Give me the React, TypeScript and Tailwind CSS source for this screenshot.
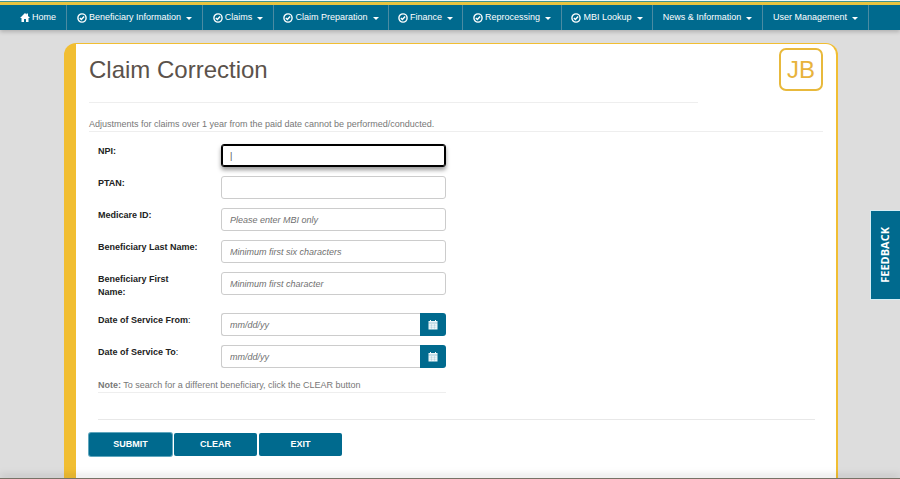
import React from "react";

type NavItem = { label: string; width: string; check?: boolean };

const navItems: NavItem[] = [
  { label: "Beneficiary Information", width: "w-[136px]", check: true },
  { label: "Claims", width: "w-[71px]", check: true },
  { label: "Claim Preparation", width: "w-[115px]", check: true },
  { label: "Finance", width: "w-[74px]", check: true },
  { label: "Reprocessing", width: "w-[99px]", check: true },
  { label: "MBI Lookup", width: "w-[91px]", check: true },
  { label: "News & Information", width: "w-[110px]" },
  { label: "User Management", width: "w-[106px]" },
];

function HomeIcon() {
  return (
    <svg viewBox="0 0 20 18" className="h-[9px] w-[10px] shrink-0 fill-white" aria-hidden="true">
      <path d="M10 0 0 10h3v8h5v-6h4v6h5v-8h3l-4-4V1h-3v2z" />
    </svg>
  );
}

function CheckIcon() {
  return (
    <svg viewBox="0 0 20 20" className="h-[10px] w-[10px] shrink-0" fill="none" stroke="white" aria-hidden="true">
      <circle cx="10" cy="10" r="8.2" strokeWidth="2.8" />
      <path d="m5.8 9.8 3 3.2 5.4-5.8" strokeWidth="3" />
    </svg>
  );
}

function CalendarIcon() {
  return (
    <svg viewBox="0 0 20 20" className="h-[10px] w-[10px]" aria-hidden="true">
      <path d="M1 2h3V0h2v2h8V0h2v2h3v17H1z" fill="#eef7fa" />
      <path d="M1 6h18" stroke="#006a8e" strokeOpacity=".5" strokeWidth="1.4" />
      <path d="M3 10.5h14M3 14.5h14M7 8v10M13 8v10" stroke="#006a8e" strokeOpacity=".25" strokeWidth="1" />
    </svg>
  );
}

const fieldBase =
  "h-[23px] min-w-0 flex-1 border bg-white px-2 text-[9px] text-[#555] placeholder:italic placeholder:text-[#707070] outline-none";

type FieldProps = {
  id: string;
  label: string;
  placeholder?: string;
  date?: boolean;
  active?: boolean;
  narrowLabel?: boolean;
};

function Field({ id, label, placeholder, date, active, narrowLabel }: FieldProps) {
  return (
    <div className="flex items-start pb-[9px]">
      <label
        htmlFor={id}
        className={`w-[123px] shrink-0 pt-px font-bold leading-[13px] text-[#222] ${narrowLabel ? "pr-8" : "pr-4"}`}
      >
        {date ? label : `${label}:`}
        {date && <span className="font-normal">:</span>}
      </label>
      <div className="flex min-w-0 flex-1">
        <input
          id={id}
          type="text"
          placeholder={placeholder}
          defaultValue={active ? "|" : undefined}
          className={`${fieldBase} ${date ? "rounded-l-[3px] border-r-0" : "rounded-[3px]"} ${
            active
              ? "border-black shadow-[0_3px_4px_rgba(0,0,0,0.4)] ring-1 ring-inset ring-black"
              : "border-[#ccc]"
          }`}
        />
        {date && (
          <button
            type="button"
            aria-label={`Choose ${label}`}
            className="flex h-[23px] w-[26px] items-center justify-center rounded-r-[3px] bg-[#006a8e]"
          >
            <CalendarIcon />
          </button>
        )}
      </div>
    </div>
  );
}

const actionClass = "h-[23px] w-[83px] rounded-[2px] bg-[#006a8e] text-[9px] font-bold text-white";

export default function App() {
  return (
    <div className="flex min-h-screen flex-col bg-[#ddd] font-['Liberation_Sans',Arial,sans-serif] text-[9px] text-[#666]">
      <header className="relative z-10 border-t border-[#f4f8f6] bg-[#006a8e] shadow-[0_2px_4px_rgba(0,0,0,0.2)]">
        <div className="h-[4px] border-t border-[#3f9490] bg-[#e9c440]" />
        <nav className="flex h-[25px] pl-[10px] text-[9px] text-white">
          <a href="#home" className="flex w-[57px] items-center justify-center gap-[2px] border-r border-[#4b8ba2]">
            <HomeIcon />
            Home
          </a>
          {navItems.map((item) => (
            <button
              key={item.label}
              type="button"
              className={`flex shrink-0 items-center justify-center whitespace-nowrap border-r border-[#4b8ba2] ${item.width}`}
            >
              {item.check && <CheckIcon />}
              <span className={item.check ? "ml-[2px]" : ""}>{item.label}</span>
              <span className="ml-[5px] mt-px border-x-[3px] border-t-[3px] border-x-transparent border-t-white" />
            </button>
          ))}
        </nav>
      </header>

      <main className="ml-[64px] mr-[62px] mt-[13px] flex-1 rounded-t-[12px] border-l-[12px] border-r-2 border-t border-[#f1be32] bg-white pl-[13px] pr-[13px]">
        <div className="flex items-start justify-between">
          <h1 className="h-[59px] flex-1 border-b border-[#eee] pt-[10px] text-[24px] leading-[32px] text-[#5b524b]">
            Claim Correction
          </h1>
          <div className="w-[125px] pt-[4px]">
            <div className="ml-auto flex h-[43px] w-[44px] items-center justify-center rounded-[7px] border-2 border-[#e8b93c] text-[24px] text-[#e8b33c]">
              JB
            </div>
          </div>
        </div>

        <p className="mt-[15px] border-b border-[#eee] leading-[13px] text-[#777]">
          Adjustments for claims over 1 year from the paid date cannot be performed/conducted.
        </p>

        <form onSubmit={(event) => event.preventDefault()}>
          <div className="ml-[9px] mt-[12px] w-[348px] max-w-full">
            <Field id="npi" label="NPI" active />
            <Field id="ptan" label="PTAN" />
            <Field id="medicare-id" label="Medicare ID" placeholder="Please enter MBI only" />
            <Field id="last-name" label="Beneficiary Last Name" placeholder="Minimum first six characters" />
            <div className="pb-[5px]">
              <Field id="first-name" label="Beneficiary First Name" placeholder="Minimum first character" narrowLabel />
            </div>
            <Field id="date-from" label="Date of Service From" placeholder="mm/dd/yy" date />
            <Field id="date-to" label="Date of Service To" placeholder="mm/dd/yy" date />
            <p className="mt-[2px] border-b border-[#eee] leading-[13px] text-[#777]">
              <strong>Note:</strong> To search for a different beneficiary, click the CLEAR button
            </p>
          </div>
          <hr className="ml-[9px] mr-2 mt-[26px] border-[#e8e8e8]" />
          <div className="mt-[13px] flex gap-[2px] pb-[21px]">
            <button type="submit" className={`${actionClass} ring-1 ring-[#5fa6bd]`}>SUBMIT</button>
            <button type="reset" className={actionClass}>CLEAR</button>
            <button type="button" className={actionClass}>EXIT</button>
          </div>
        </form>
      </main>

      <footer className="relative h-px bg-[#777266] shadow-[0_-2px_7px_rgba(0,0,0,0.5)]" />

      <button
        type="button"
        className="fixed right-0 top-[210px] flex h-[90px] w-[30px] items-center justify-center border border-r-0 border-[#d5eef5] bg-[#006a8e] font-['Open_Sans',sans-serif] text-[11px] font-bold text-white"
      >
        <span className="rotate-180 [writing-mode:vertical-rl]">FEEDBACK</span>
      </button>
    </div>
  );
}
